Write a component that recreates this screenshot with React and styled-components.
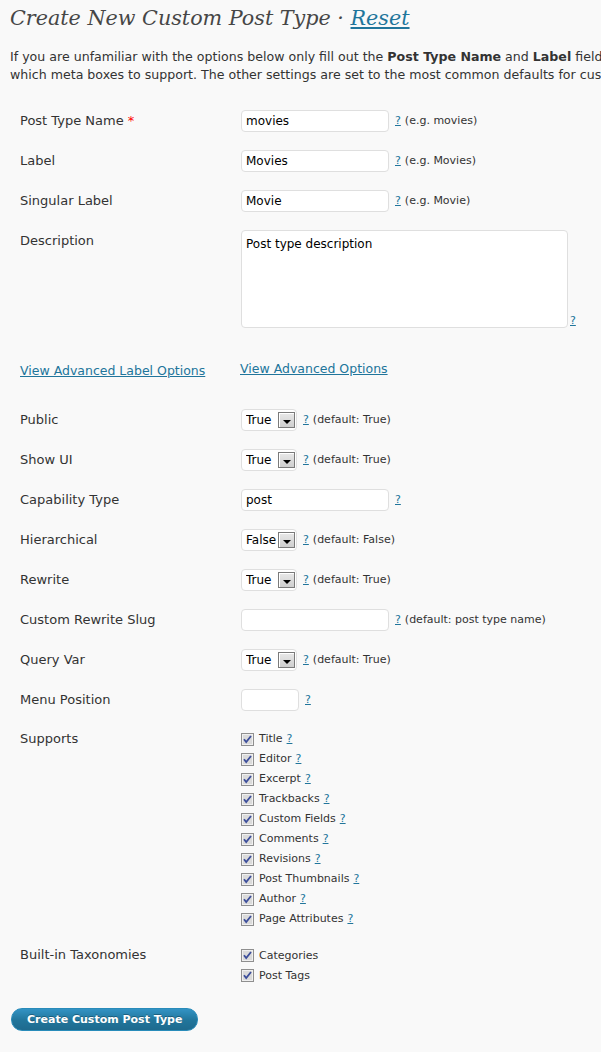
import React from "react";
import styled, { createGlobalStyle } from "styled-components";

const Global = createGlobalStyle`
  html, body { margin: 0; padding: 0; background: #f9f9f9; overflow: hidden; }
  body { font-family: "DejaVu Sans", Verdana, sans-serif; color: #333; font-size: 12px; }
`;

const Page = styled.div`
  padding: 4px 0 0 10px;
  width: 900px;
`;

const Title = styled.h2`
  margin: 0;
  font-family: "DejaVu Serif", Georgia, serif;
  font-style: italic;
  font-weight: normal;
  font-size: 20.7px;
  line-height: 28px;
  color: #464646;
`;

const TitleLink = styled.a`
  color: #21759b;
  text-decoration: underline;
`;

const Intro = styled.p`
  margin: 16px 0 0 0;
  font-size: 12.6px;
  line-height: 18px;
  white-space: nowrap;
  color: #333;
`;

const Form = styled.div`
  margin-top: 26px;
`;

const Row = styled.div`
  display: flex;
  align-items: flex-start;
  margin-bottom: ${(p) => (p.$gap !== undefined ? p.$gap : 18)}px;
`;

const Label = styled.div`
  width: 221px;
  padding-left: 10px;
  flex: none;
  font-size: 13px;
  line-height: ${(p) => p.$lh || 22}px;
  color: #333;
`;

const Req = styled.span`
  color: #f00;
`;

const Field = styled.div`
  display: flex;
  align-items: ${(p) => (p.$end ? "flex-end" : "center")};
  gap: ${(p) => (p.$gap !== undefined ? p.$gap : 6)}px;
`;

const TextInput = styled.div`
  box-sizing: border-box;
  width: ${(p) => p.$w || 148}px;
  height: 22px;
  border: 1px solid #dfdfdf;
  border-radius: 4px;
  background: #fff;
  padding: 0 4px;
  font-size: 12px;
  line-height: 20px;
  color: #000;
`;

const TextArea = styled.div`
  box-sizing: border-box;
  width: 327px;
  height: 98px;
  border: 1px solid #dfdfdf;
  border-radius: 4px;
  background: #fff;
  padding: 5px 4px;
  font-size: 12px;
  line-height: 16px;
  color: #000;
`;

const Help = styled.a`
  color: #21759b;
  text-decoration: underline;
  font-size: 11px;
  line-height: 14px;
`;

const Hint = styled.span`
  font-size: 11px;
  color: #333;
  line-height: 14px;
`;

const HelpGroup = styled.span`
  display: inline-flex;
  align-items: center;
  gap: 4px;
`;

const SelectBox = styled.div`
  box-sizing: border-box;
  width: 56px;
  height: 22px;
  border: 1px solid #dfdfdf;
  border-radius: 4px;
  background: #fff;
  display: flex;
  align-items: center;
  padding: 0 1px 0 4px;
  font-size: 12px;
  color: #000;
`;

const SelectValue = styled.span`
  flex: 1;
  overflow: hidden;
  white-space: nowrap;
`;

const DropButton = styled.span`
  box-sizing: border-box;
  width: 17px;
  height: 16px;
  flex: none;
  border: 1px solid #7a7a7a;
  background: linear-gradient(#e8e8e8, #cfcfcf);
  box-shadow: inset 1px 1px 0 #fff;
  display: flex;
  align-items: center;
  justify-content: center;
  &::after {
    content: "";
    display: block;
    margin-top: 3px;
    border-left: 4px solid transparent;
    border-right: 4px solid transparent;
    border-top: 4px solid #000;
  }
`;

const AdvLink = styled.a`
  color: #21759b;
  text-decoration: underline;
  font-size: 12.5px;
  line-height: 18px;
  display: block;
  margin-top: ${(p) => p.$mt || 0}px;
  margin-left: ${(p) => p.$ml || 0}px;
`;

const CheckList = styled.div`
  display: flex;
  flex-direction: column;
`;

const CheckItem = styled.label`
  display: flex;
  align-items: center;
  height: 20px;
  gap: 5px;
  font-size: 11px;
  color: #333;
`;

const CheckText = styled.span`
  display: inline-flex;
  gap: 4px;
`;

const Button = styled.button`
  margin: 0 0 0 1px;
  box-sizing: border-box;
  height: 23px;
  padding: 0 15px;
  border: 1px solid #298cba;
  border-radius: 11px;
  background: linear-gradient(#3393c4, #21759b 55%, #1e6a8e);
  color: #fff;
  font-family: "DejaVu Sans", Verdana, sans-serif;
  font-weight: bold;
  font-size: 11px;
  text-shadow: 0 -1px 0 rgba(0, 0, 0, 0.3);
  cursor: pointer;
`;

const CheckBox = () => (
  <svg width="13" height="13" viewBox="0 0 13 13" style={{ flex: "none" }}>
    <rect x="0.5" y="0.5" width="12" height="12" fill="#dadada" stroke="#8f8f8f" />
    <rect x="1.5" y="1.5" width="10" height="10" fill="none" stroke="#f0f0f0" />
    <polyline points="3,6.2 5.2,9 10,3" fill="none" stroke="#3b4d9a" strokeWidth="1.8" />
  </svg>
);

const Select = ({ value }) => (
  <SelectBox>
    <SelectValue>{value}</SelectValue>
    <DropButton />
  </SelectBox>
);

const HelpHint = ({ hint }) => (
  <HelpGroup>
    <Help href="#">?</Help>
    {hint && <Hint>{hint}</Hint>}
  </HelpGroup>
);

const supports = [
  "Title",
  "Editor",
  "Excerpt",
  "Trackbacks",
  "Custom Fields",
  "Comments",
  "Revisions",
  "Post Thumbnails",
  "Author",
  "Page Attributes",
];

export default function App() {
  return (
    <>
      <Global />
      <Page>
        <Title>
          Create New Custom Post Type · <TitleLink href="#">Reset</TitleLink>
        </Title>
        <Intro>
          If you are unfamiliar with the options below only fill out the <strong>Post Type Name</strong> and{" "}
          <strong>Label</strong> fields and check
          <br />
          which meta boxes to support. The other settings are set to the most common defaults for custom post types.
        </Intro>
        <Form>
          <Row>
            <Label>
              Post Type Name <Req>*</Req>
            </Label>
            <Field>
              <TextInput>movies</TextInput>
              <HelpHint hint="(e.g. movies)" />
            </Field>
          </Row>
          <Row>
            <Label>Label</Label>
            <Field>
              <TextInput>Movies</TextInput>
              <HelpHint hint="(e.g. Movies)" />
            </Field>
          </Row>
          <Row>
            <Label>Singular Label</Label>
            <Field>
              <TextInput>Movie</TextInput>
              <HelpHint hint="(e.g. Movie)" />
            </Field>
          </Row>
          <Row $gap={34}>
            <Label>Description</Label>
            <Field $end $gap={2}>
              <TextArea>Post type description</TextArea>
              <HelpHint />
            </Field>
          </Row>
          <Row $gap={29}>
            <Label $lh={18}>
              <AdvLink href="#">View Advanced Label Options</AdvLink>
            </Label>
            <AdvLink href="#" $mt={-2} $ml={-1}>
              View Advanced Options
            </AdvLink>
          </Row>
          <Row>
            <Label>Public</Label>
            <Field>
              <Select value="True" />
              <HelpHint hint="(default: True)" />
            </Field>
          </Row>
          <Row>
            <Label>Show UI</Label>
            <Field>
              <Select value="True" />
              <HelpHint hint="(default: True)" />
            </Field>
          </Row>
          <Row>
            <Label>Capability Type</Label>
            <Field>
              <TextInput>post</TextInput>
              <HelpHint />
            </Field>
          </Row>
          <Row>
            <Label>Hierarchical</Label>
            <Field>
              <Select value="False" />
              <HelpHint hint="(default: False)" />
            </Field>
          </Row>
          <Row>
            <Label>Rewrite</Label>
            <Field>
              <Select value="True" />
              <HelpHint hint="(default: True)" />
            </Field>
          </Row>
          <Row>
            <Label>Custom Rewrite Slug</Label>
            <Field>
              <TextInput />
              <HelpHint hint="(default: post type name)" />
            </Field>
          </Row>
          <Row>
            <Label>Query Var</Label>
            <Field>
              <Select value="True" />
              <HelpHint hint="(default: True)" />
            </Field>
          </Row>
          <Row>
            <Label>Menu Position</Label>
            <Field>
              <TextInput $w={58} />
              <HelpHint />
            </Field>
          </Row>
          <Row $gap={16}>
            <Label $lh={20}>Supports</Label>
            <CheckList>
              {supports.map((s) => (
                <CheckItem key={s}>
                  <CheckBox />
                  <CheckText>
                    {s} <Help href="#">?</Help>
                  </CheckText>
                </CheckItem>
              ))}
            </CheckList>
          </Row>
          <Row $gap={23}>
            <Label $lh={20}>Built-in Taxonomies</Label>
            <CheckList>
              {["Categories", "Post Tags"].map((s) => (
                <CheckItem key={s}>
                  <CheckBox />
                  <CheckText>{s}</CheckText>
                </CheckItem>
              ))}
            </CheckList>
          </Row>
          <Button>Create Custom Post Type</Button>
        </Form>
      </Page>
    </>
  );
}
